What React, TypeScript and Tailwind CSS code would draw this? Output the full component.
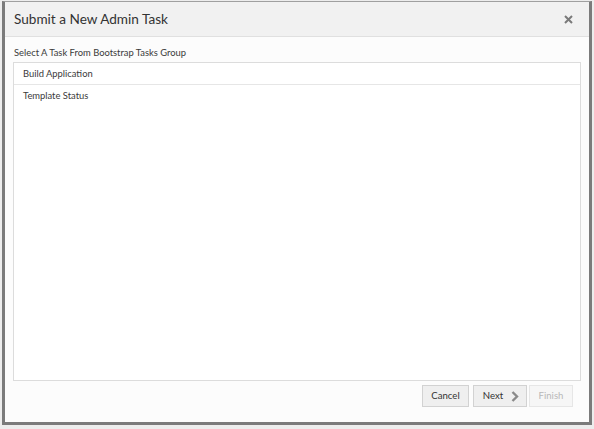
export default function App() {
  const tasks = ['Build Application', 'Template Status']

  return (
    <div className="h-[429px] w-[594px] bg-[#ededed] pl-[2px] pt-[1px] font-['Lato','Liberation_Sans',sans-serif]">
      <div className="flex h-[424px] w-[590px] flex-col border-x-[3px] border-b-[3px] border-t border-[#7b7b7b] border-t-[#a0a0a0] bg-[#fcfcfc]">
        {/* header */}
        <div className="flex h-[35px] shrink-0 items-center justify-between border-b border-[#e0e0e0] bg-[#f1f1f1] pl-[9px] pr-[16px]">
          <h1 className="pt-[1px] text-[13.6px] text-[#333333]">Submit a New Admin Task</h1>
          <svg width="9" height="9" viewBox="0 0 9 9" className="mt-[1px]">
            <path d="M1 1 L8 8 M8 1 L1 8" stroke="#7a7a7a" strokeWidth="2" />
          </svg>
        </div>

        {/* body */}
        <div className="flex flex-1 flex-col px-[8px]">
          <p className="pl-[1px] pt-[9px] pb-[2px] text-[9.4px] leading-[14px] text-[#3a3a3a]">
            Select A Task From Bootstrap Tasks Group
          </p>
          <ul className="h-[319px] border border-[#dcdcdc] bg-white">
            {tasks.map((t, i) => (
              <li
                key={t}
                className={
                  'flex h-[22px] items-center pl-[9px] text-[9.4px] text-[#3a3a3a] ' +
                  (i === 0 ? 'border-b border-[#e6e6e6] pt-[2px]' : '')
                }
              >
                {t}
              </li>
            ))}
          </ul>

          <div className="mt-[4px] flex justify-end pr-[8px]">
            <button className="h-[22px] w-[47px] border border-[#d2d2d2] bg-[#efefef] text-[9.6px] text-[#333333]">
              Cancel
            </button>
            <button className="ml-[4px] flex h-[22px] w-[54px] items-center justify-center gap-[8px] border border-[#d2d2d2] bg-[#efefef] pl-[2px] text-[9.6px] text-[#333333]">
              Next
              <svg width="8" height="11" viewBox="0 0 8 11">
                <path d="M1.5 1 L6 5.5 L1.5 10" stroke="#8a8a8a" strokeWidth="2.4" fill="none" />
              </svg>
            </button>
            <button
              disabled
              className="ml-[2px] h-[22px] w-[44px] border border-[#e6e6e6] bg-[#f6f6f6] text-[9.6px] text-[#b8b8b8]"
            >
              Finish
            </button>
          </div>
        </div>
      </div>
    </div>
  )
}
